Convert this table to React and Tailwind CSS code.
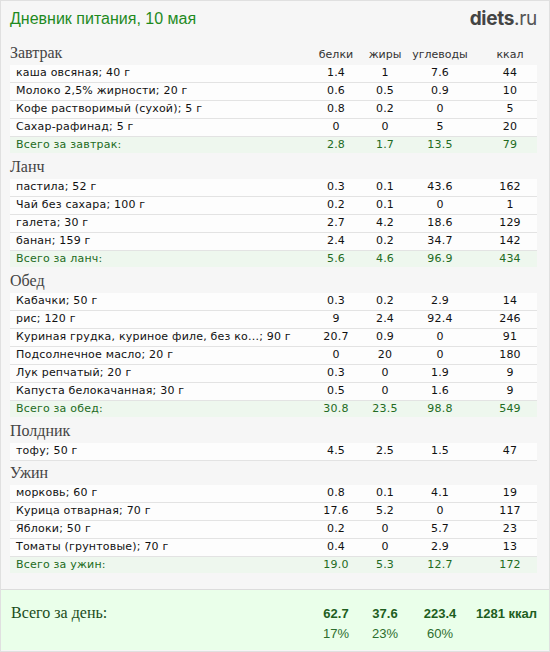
import React from 'react';

const MEALS = [
  {
    title: 'Завтрак',
    items: [
      ['каша овсяная; 40 г', '1.4', '1', '7.6', '44'],
      ['Молоко 2,5% жирности; 20 г', '0.6', '0.5', '0.9', '10'],
      ['Кофе растворимый (сухой); 5 г', '0.8', '0.2', '0', '5'],
      ['Сахар-рафинад; 5 г', '0', '0', '5', '20'],
    ],
    total: ['Всего за завтрак:', '2.8', '1.7', '13.5', '79'],
  },
  {
    title: 'Ланч',
    items: [
      ['пастила; 52 г', '0.3', '0.1', '43.6', '162'],
      ['Чай без сахара; 100 г', '0.2', '0.1', '0', '1'],
      ['галета; 30 г', '2.7', '4.2', '18.6', '129'],
      ['банан; 159 г', '2.4', '0.2', '34.7', '142'],
    ],
    total: ['Всего за ланч:', '5.6', '4.6', '96.9', '434'],
  },
  {
    title: 'Обед',
    items: [
      ['Кабачки; 50 г', '0.3', '0.2', '2.9', '14'],
      ['рис; 120 г', '9', '2.4', '92.4', '246'],
      ['Куриная грудка, куриное филе, без ко...; 90 г', '20.7', '0.9', '0', '91'],
      ['Подсолнечное масло; 20 г', '0', '20', '0', '180'],
      ['Лук репчатый; 20 г', '0.3', '0', '1.9', '9'],
      ['Капуста белокачанная; 30 г', '0.5', '0', '1.6', '9'],
    ],
    total: ['Всего за обед:', '30.8', '23.5', '98.8', '549'],
  },
  {
    title: 'Полдник',
    items: [['тофу; 50 г', '4.5', '2.5', '1.5', '47']],
    total: null,
  },
  {
    title: 'Ужин',
    items: [
      ['морковь; 60 г', '0.8', '0.1', '4.1', '19'],
      ['Курица отварная; 70 г', '17.6', '5.2', '0', '117'],
      ['Яблоки; 50 г', '0.2', '0', '5.7', '23'],
      ['Томаты (грунтовые); 70 г', '0.4', '0', '2.9', '13'],
    ],
    total: ['Всего за ужин:', '19.0', '5.3', '12.7', '172'],
  },
];

const SANS = "font-['DejaVu_Sans',Verdana,sans-serif]";
const SERIF = "font-['Liberation_Serif',Georgia,serif]";

// колонки чисел: белки / жиры / углеводы / ккал
const Cols = ({ values }) => (
  <>
    <div className="w-[50px] shrink-0 text-center">{values[0]}</div>
    <div className="w-[48px] shrink-0 text-center">{values[1]}</div>
    <div className="w-[62px] shrink-0 text-center">{values[2]}</div>
    <div className="w-[66px] shrink-0 pl-[12px] text-center">{values[3]}</div>
  </>
);

const MealBlock = ({ meal, first }) => (
  <div>
    <div className="h-[24px] flex items-end pb-[4px]">
      <div className={`flex-1 ${SERIF} text-[16px] leading-none text-[#444]`}>{meal.title}</div>
      {first && (
        <div className={`flex ${SANS} text-[11px] leading-none text-[#333] pb-[1px]`}>
          <Cols values={['белки', 'жиры', 'углеводы', 'ккал']} />
        </div>
      )}
    </div>
    {meal.items.map((row, i) => (
      <div
        key={i}
        className={`h-[18px] flex items-center bg-[#fdfdfd] border-b border-[#e3e3e3] ${SANS} text-[11px] tracking-[0.2px] text-[#111]`}
      >
        <div className="flex-1 pl-[6px] whitespace-nowrap overflow-hidden">{row[0]}</div>
        <Cols values={row.slice(1)} />
      </div>
    ))}
    {meal.total && (
      <div className="h-[18px] pb-[2px]">
        <div className={`h-[16px] flex items-center bg-[#eef7ee] ${SANS} text-[11px] tracking-[0.2px] text-[#226b22]`}>
          <div className="flex-1 pl-[6px]">{meal.total[0]}</div>
          <Cols values={meal.total.slice(1)} />
        </div>
      </div>
    )}
  </div>
);

export default function App() {
  return (
    <div className="w-[550px] h-[652px] bg-[#f6f6f6] border border-[#e0e0e0] flex flex-col overflow-hidden">
      <div className="pl-[9px] pr-[12px]">
        <div className="h-[40px] flex items-start justify-between">
          <div className="pt-[6px] font-['Liberation_Sans',Tahoma,sans-serif] text-[16px] text-[#1e8a1e]">
            Дневник питания, 10 мая
          </div>
          <div className="pt-[4px] font-['Inter',sans-serif] text-[19px] text-[#444] tracking-[-0.3px]">
            <span className="font-bold">diets</span>
            <span className="font-normal text-[#555]">.ru</span>
          </div>
        </div>
        {MEALS.map((meal, i) => (
          <MealBlock key={meal.title} meal={meal} first={i === 0} />
        ))}
      </div>
      <div className="mt-auto mb-[1px] h-[61px] bg-[#eaffea] border-t border-[#dcdcdc] flex pl-[10px] pr-[12px] pt-[12px]">
        <div className={`flex-1 ${SERIF} text-[16px] leading-none text-[#1a4d1a] pt-[3px]`}>Всего за день:</div>
        <div className="flex flex-col font-['Liberation_Sans',Arial,sans-serif] text-[13px] leading-none">
          <div className="flex font-bold text-[#1e5e1e] h-[20px] items-end pb-[2px]">
            <div className="w-[50px] text-center">62.7</div>
            <div className="w-[48px] text-center">37.6</div>
            <div className="w-[62px] text-center">223.4</div>
            <div className="w-[66px] text-right">1281 ккал</div>
          </div>
          <div className="flex text-[#2d6e2d] h-[20px] items-end pb-[2px]">
            <div className="w-[50px] text-center">17%</div>
            <div className="w-[48px] text-center">23%</div>
            <div className="w-[62px] text-center">60%</div>
            <div className="w-[66px]"></div>
          </div>
        </div>
      </div>
    </div>
  );
}
